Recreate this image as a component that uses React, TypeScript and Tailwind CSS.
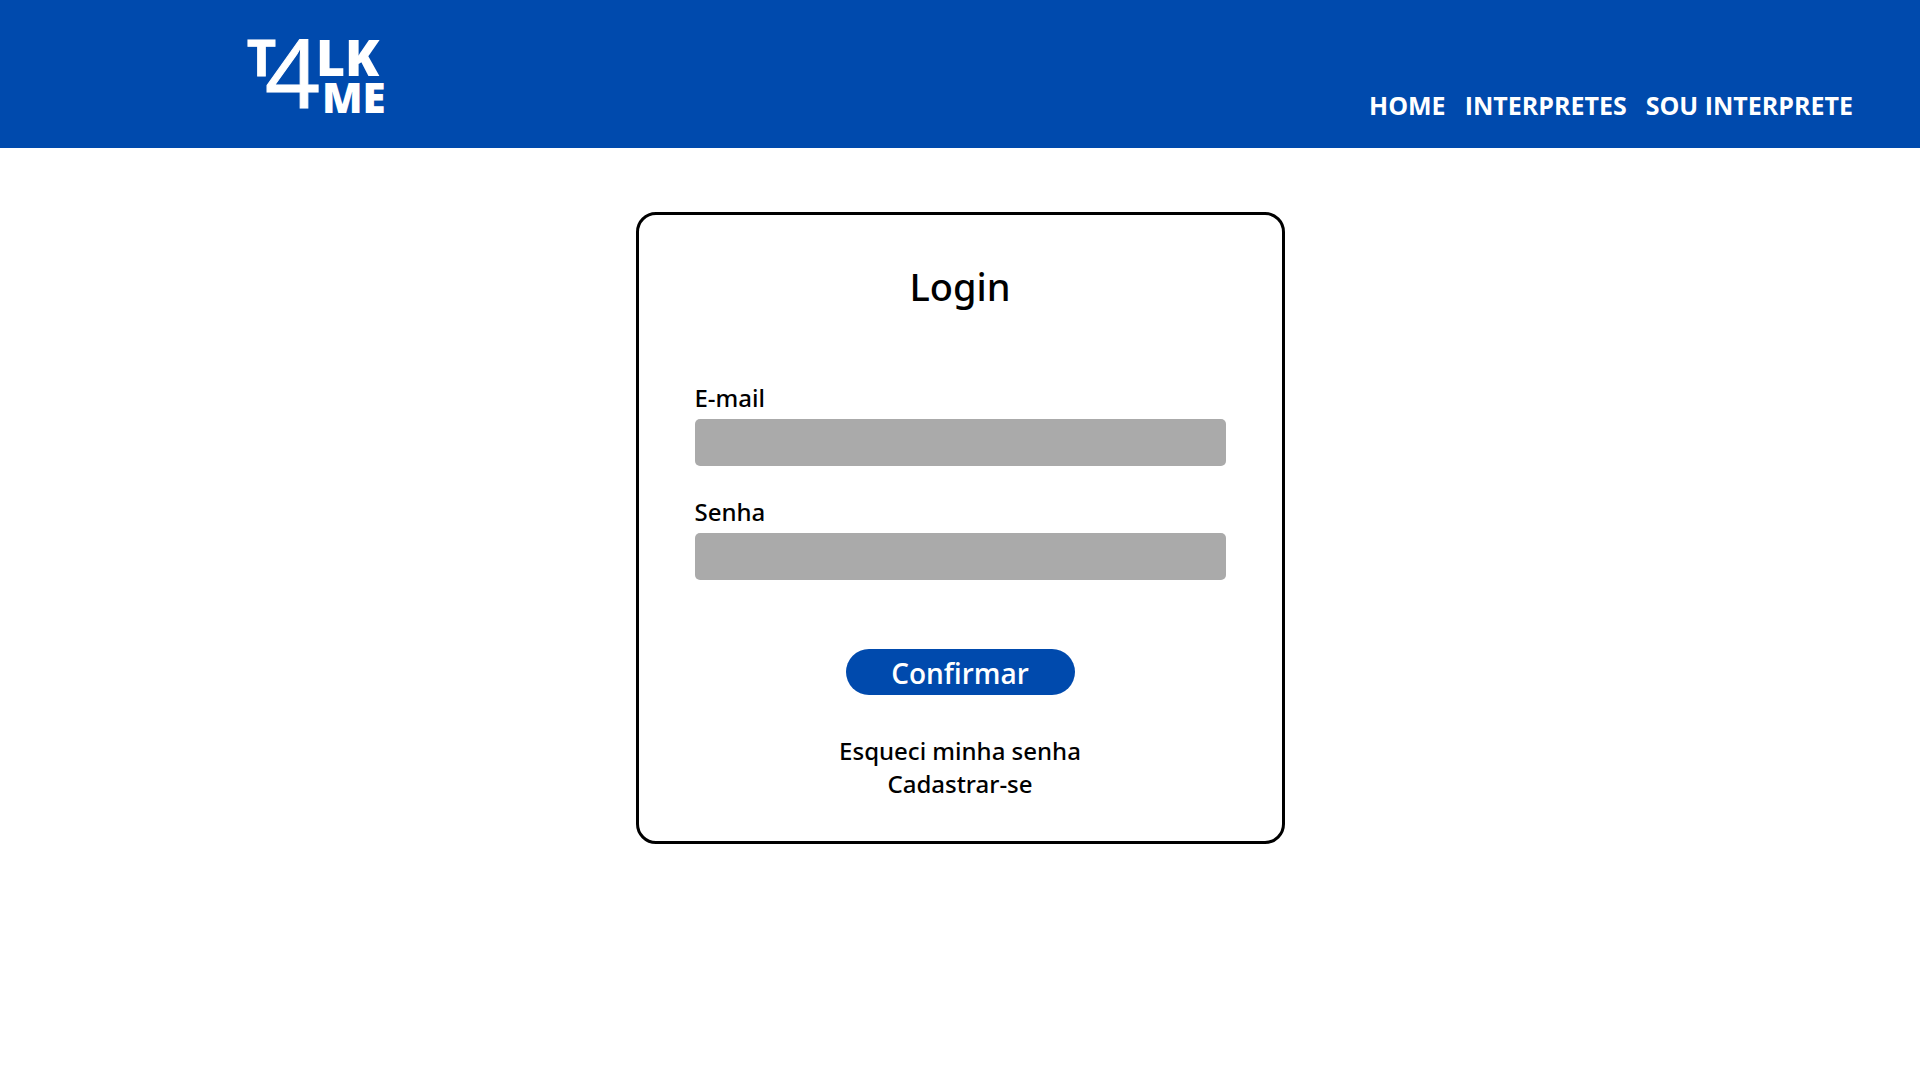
const navItems = ["HOME", "INTERPRETES", "SOU INTERPRETE"];

function Logo() {
  return (
    <svg
      viewBox="0 0 140 76"
      className="h-[76px] w-[140px] overflow-visible fill-white font-['Open_Sans',sans-serif]"
      role="img"
      aria-label="T4LK ME"
    >
      <text x="-1" y="38" fontSize="50" fontWeight="700" stroke="white" strokeWidth="1">T</text>
      <text x="17" y="70" fontSize="96" fontWeight="400" stroke="white" strokeWidth="1">4</text>
      <text x="68" y="38" fontSize="50" fontWeight="800">LK</text>
      <text x="74" y="75" fontSize="42" fontWeight="800">ME</text>
    </svg>
  );
}

function Field({ id, label, type }: { id: string; label: string; type: string }) {
  return (
    <div className="flex flex-col">
      <label htmlFor={id} className="text-2xl leading-[42px] font-medium">
        {label}
      </label>
      <input id={id} type={type} className="h-[47px] w-full rounded-[5px] bg-[#aaaaaa] px-3 text-2xl outline-none" />
    </div>
  );
}

export default function App() {
  return (
    <div className="min-h-screen bg-white font-['Noto_Sans','Open_Sans',sans-serif] text-black">
      <header className="flex justify-between bg-[#004aad] pt-[38px] pr-[67px] pb-[25px] pl-[248px]">
        <a href="#" className="block pb-[9px]">
          <Logo />
        </a>
        <nav className="flex items-end gap-[19px] font-['Open_Sans',sans-serif] text-[25px] leading-9 font-bold text-white">
          {navItems.map((item) => (
            <a key={item} href="#">
              {item}
            </a>
          ))}
        </nav>
      </header>

      <main className="flex justify-center px-4 pt-16">
        <form className="flex w-full max-w-[649px] flex-col rounded-[20px] border-[3px] border-black px-14 pt-11 pb-[41px]">
          <h1 className="text-center text-[38px] leading-[54px] font-medium">Login</h1>
          <div className="mt-16 flex flex-col gap-[25px]">
            <Field id="email" label="E-mail" type="email" />
            <Field id="senha" label="Senha" type="password" />
          </div>
          <button
            type="button"
            className="mt-[69px] h-[46px] w-[229px] self-center rounded-full bg-[#004aad] pt-0.5 font-['Open_Sans',sans-serif] text-[28px] leading-[44px] font-semibold text-white"
          >
            Confirmar
          </button>
          <div className="mt-[39px] flex flex-col items-center text-2xl leading-[33px] font-medium">
            <a href="#">Esqueci minha senha</a>
            <a href="#">Cadastrar-se</a>
          </div>
        </form>
      </main>
    </div>
  );
}
